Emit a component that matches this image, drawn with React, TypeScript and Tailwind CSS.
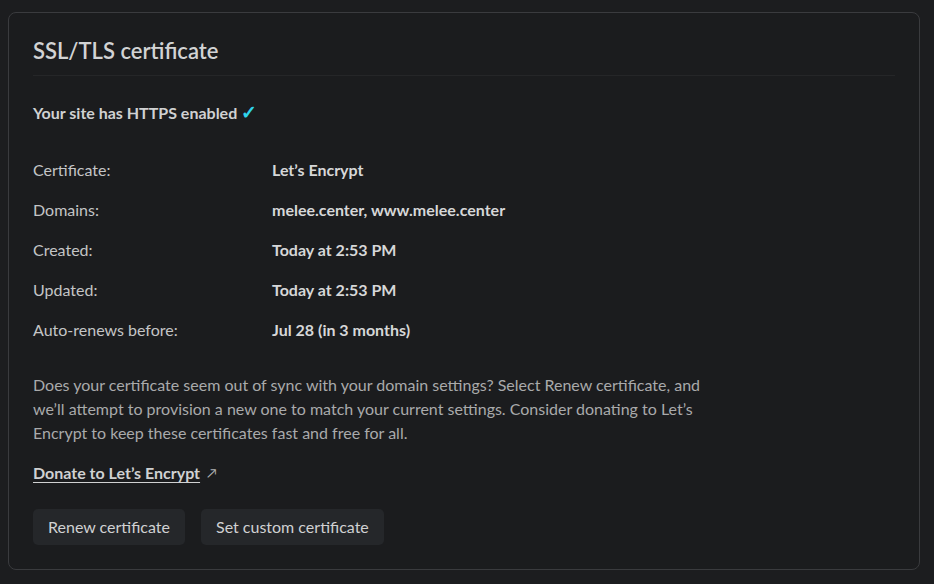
export default function App() {
  const rows: [string, string][] = [
    ["Certificate:", "Let\u2019s Encrypt"],
    ["Domains:", "melee.center, www.melee.center"],
    ["Created:", "Today at 2:53 PM"],
    ["Updated:", "Today at 2:53 PM"],
    ["Auto-renews before:", "Jul 28 (in 3 months)"],
  ];
  return (
    <div
      className="min-h-[584px] w-[934px] bg-[#1c1d1f] pt-[12px] pl-[8px] pr-[14px] pb-[14px]"
      style={{ fontFamily: "Lato, 'Noto Sans', sans-serif" }}
    >
      <section className="rounded-[8px] border border-[#3a3b3e] bg-[#1b1c1e] px-[24px] pt-[22px] pb-[24px]">
        <h2 className="border-b border-[#252628] pb-[8px] text-[22px] leading-[32px] font-semibold text-[#d2d3d4]">
          SSL/TLS certificate
        </h2>
        <p className="mt-[25px] text-[16px] leading-[22px] font-bold text-[#d0d1d2]">
          Your site has HTTPS enabled{" "}
          <span className="text-[19px] font-bold text-[#2fd3ea]">✓</span>
        </p>
        <dl className="mt-[26px] flex flex-col">
          {rows.map(([k, v]) => (
            <div key={k} className="flex h-[40px] items-center text-[16px]">
              <dt className="w-[239px] text-[#c4c5c6]">{k}</dt>
              <dd className="font-bold text-[#d6d7d8]">{v}</dd>
            </div>
          ))}
        </dl>
        <p className="mt-[23px] max-w-[690px] text-[16px] leading-[24px] text-[#a9aaab]">
          Does your certificate seem out of sync with your domain settings? Select Renew certificate, and we&rsquo;ll attempt to provision a new one to match your current settings. Consider donating to Let&rsquo;s Encrypt to keep these certificates fast and free for all.
        </p>
        <a
          href="#"
          className="mt-[16px] inline-flex items-center gap-[7px] text-[16px] leading-[24px] font-bold text-[#d0d1d2]"
        >
          <span className="underline underline-offset-[3px]">Donate to Let&rsquo;s Encrypt</span>
          <span className="text-[13px] font-normal text-[#b0b1b2]">↗</span>
        </a>
        <div className="mt-[24px] flex gap-[16px]">
          <button className="h-[36px] rounded-[5px] bg-[#25272a] px-[15px] text-[16px] text-[#d0d1d2]">
            Renew certificate
          </button>
          <button className="h-[36px] rounded-[5px] bg-[#25272a] px-[15px] text-[16px] text-[#d0d1d2]">
            Set custom certificate
          </button>
        </div>
      </section>
    </div>
  );
}
